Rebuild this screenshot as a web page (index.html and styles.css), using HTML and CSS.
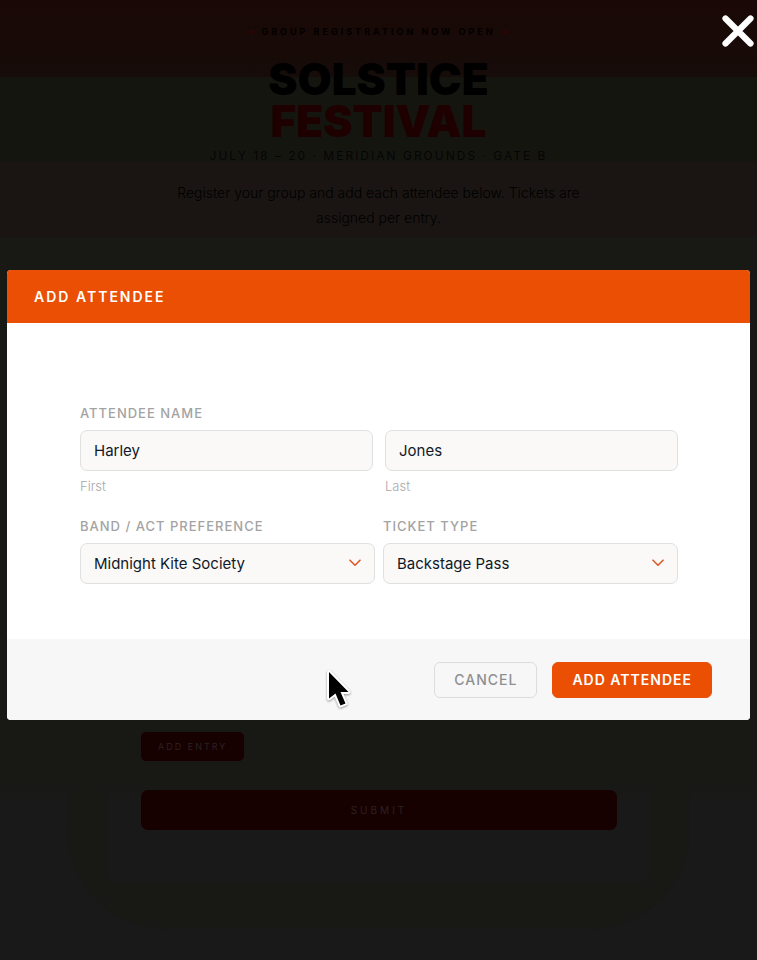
FILE: index.html
```html
<!DOCTYPE html>
<html lang="en">

<head>
    <meta charset="UTF-8">
    <meta name="viewport" content="width=device-width, initial-scale=1.0">
    <title>Solstice Festival</title>

    <link rel="stylesheet" href="styles.css">
</head>

<body>
    <div class="page">
        <header class="hero">
            <div class="eyebrow"><i class="dot"></i><span>GROUP REGISTRATION NOW OPEN</span><i class="dot"></i></div>
            <h1 class="title">SOLSTICE<br><span class="accent">FESTIVAL</span></h1>
            <div class="date">JULY 18 – 20 · MERIDIAN GROUNDS · GATE B</div>
            <p class="intro">Register your group and add each attendee below. Tickets are assigned per entry.</p>
        </header>

        <main class="halo">
            <div class="card">
                <div class="entries"></div>
                <button type="button" class="entry-button">ADD ENTRY</button>
                <button type="button" class="submit-button">SUBMIT</button>
            </div>
        </main>
    </div>

    <div class="overlay">
        <button type="button" class="close" aria-label="Close">
            <svg width="32" height="32" viewBox="0 0 32 32">
                <path d="M3.5 3.5L28.5 28.5M28.5 3.5L3.5 28.5" stroke="#fff" stroke-width="6.2" stroke-linecap="round" />
            </svg>
        </button>

        <form class="modal" role="dialog" aria-labelledby="modal-title">
            <h2 class="modal-header" id="modal-title">ADD ATTENDEE</h2>

            <div class="modal-body">
                <fieldset class="name">
                    <legend class="label">ATTENDEE NAME</legend>
                    <div class="name-row">
                        <div class="field">
                            <input class="control" id="first" type="text" value="Harley">
                            <label class="sublabel" for="first">First</label>
                        </div>
                        <div class="field">
                            <input class="control" id="last" type="text" value="Jones">
                            <label class="sublabel" for="last">Last</label>
                        </div>
                    </div>
                </fieldset>

                <div class="select-row">
                    <div class="field">
                        <label class="label" for="band">BAND / ACT PREFERENCE</label>
                        <div class="select">
                            <select class="control" id="band">
                                <option>Midnight Kite Society</option>
                            </select>
                            <svg class="chevron" width="12" height="8" viewBox="0 0 12 8">
                                <path d="M1 1.2L6 6.2L11 1.2" />
                            </svg>
                        </div>
                    </div>
                    <div class="field">
                        <label class="label" for="ticket">TICKET TYPE</label>
                        <div class="select">
                            <select class="control" id="ticket">
                                <option>Backstage Pass</option>
                            </select>
                            <svg class="chevron" width="12" height="8" viewBox="0 0 12 8">
                                <path d="M1 1.2L6 6.2L11 1.2" />
                            </svg>
                        </div>
                    </div>
                </div>
            </div>

            <div class="modal-footer">
                <button type="button" class="button cancel">CANCEL</button>
                <button type="button" class="button add">ADD ATTENDEE</button>
            </div>

            <svg class="cursor" width="32" height="44" viewBox="0 0 32 44">
                <path d="M5 4V30.5L11.5 25.5L16.5 37.5L21.5 35.5L16.5 24H24.5Z" fill="#000" stroke="#fff" stroke-width="4" stroke-linejoin="round" paint-order="stroke" />
            </svg>
        </form>
    </div>
</body>

</html>
```
FILE: styles.css
```css
* {
    box-sizing: border-box;
}

body {
    margin: 0;
    font-family: Inter, "Liberation Sans", sans-serif;
    background: #191919;
}

button,
input,
select {
    font-family: inherit;
}

.page {
    min-height: 100vh;
    padding: 24px 67px 32px;
    background: linear-gradient(#1a0806 0, #160c09 77px, #151510 77px, #151510 162px, #1a1512 162px, #1a1512 237px, #181815 237px, #181815 780px, #191919 800px);
}

/* hero */
.hero {
    text-align: center;
    color: #000;
}

.eyebrow {
    display: flex;
    align-items: center;
    justify-content: center;
    gap: 8px;
    font-size: 9px;
    line-height: 16px;
    font-weight: 700;
    letter-spacing: 3px;
}

.dot {
    width: 4px;
    height: 4px;
    border-radius: 50%;
    background: #300404;
}

.title {
    margin: 18px 0 6px;
    font-size: 44px;
    line-height: 42px;
    font-weight: 900;
}

.accent {
    color: #1e0000;
}

.date {
    font-size: 12px;
    line-height: 16px;
    letter-spacing: 2px;
    color: #050505;
}

.intro {
    max-width: 430px;
    margin: 16px auto 0;
    font-size: 14px;
    line-height: 25px;
    font-weight: 300;
}

/* group form */
.halo {
    margin-top: 42px;
    padding: 0 39px 46px 40px;
    border-radius: 0 0 100px 100px;
    background: #181815;
}

.card {
    padding: 34px 34px 53px;
    border-radius: 14px;
    background: linear-gradient(#181815 510px, #191919 530px);
}

.entries {
    min-height: 426px;
}

.entry-button,
.submit-button {
    display: block;
    border: none;
    background: #170000;
    color: #2b2222;
}

.entry-button {
    height: 29px;
    padding: 0 17px;
    border-radius: 5px;
    font-size: 9px;
    letter-spacing: 2px;
}

.submit-button {
    width: 100%;
    height: 40px;
    margin-top: 29px;
    border-radius: 7px;
    font-size: 10px;
    letter-spacing: 3px;
}

/* modal */
.overlay {
    position: fixed;
    top: 0;
    left: 0;
    width: 100%;
    height: 100%;
    padding: 30px 7px 0;
    display: flex;
    align-items: center;
}

.close {
    position: absolute;
    top: 15px;
    right: 3px;
    width: 32px;
    height: 32px;
    padding: 0;
    border: none;
    background: none;
    cursor: pointer;
}

.modal {
    position: relative;
    width: 100%;
    border-radius: 4px;
    background: #fff;
}

.modal-header {
    margin: 0;
    padding: 0 27px;
    border-radius: 4px 4px 0 0;
    background: #ea4f04;
    color: #fff;
    font-size: 14px;
    line-height: 53px;
    font-weight: 600;
    letter-spacing: 2px;
}

.modal-body {
    padding: 80px 72px 55px 73px;
}

.name {
    margin: 0;
    padding: 0;
    border: none;
}

.name-row,
.select-row {
    display: flex;
}

.name-row {
    gap: 12px;
}

.select-row {
    gap: 8px;
    margin-top: 20px;
}

.field {
    flex: 1;
    min-width: 0;
}

.label {
    display: block;
    padding: 0 0 7px;
    color: #a3a3a3;
    font-size: 13px;
    line-height: 20px;
    font-weight: 500;
    letter-spacing: 1px;
}

.control {
    display: block;
    width: 100%;
    height: 41px;
    padding: 0 13px;
    border: 1px solid #dfe0e0;
    border-radius: 7px;
    background: #faf9f8;
    color: #111827;
    font-size: 15px;
    appearance: none;
}

.sublabel {
    display: block;
    padding-top: 5px;
    color: #a8a8a8;
    font-size: 13px;
    line-height: 20px;
    font-weight: 300;
}

.select {
    position: relative;
}

.chevron {
    position: absolute;
    top: 16px;
    right: 14px;
    fill: none;
    stroke: #dc5a24;
    stroke-width: 1.6;
    stroke-linecap: round;
    stroke-linejoin: round;
    pointer-events: none;
}

.modal-footer {
    display: flex;
    align-items: center;
    justify-content: flex-end;
    gap: 15px;
    height: 81px;
    padding: 0 38px;
    border-radius: 0 0 4px 4px;
    background: #f7f7f7;
}

.button {
    height: 36px;
    padding: 0 19px;
    border: 1px solid #ea4f04;
    border-radius: 6px;
    font-size: 14px;
    font-weight: 600;
    letter-spacing: 1px;
    cursor: pointer;
}

.cancel {
    border-color: #dcdddd;
    background: #f7f7f7;
    color: #8d9093;
    font-weight: 500;
}

.add {
    background: #ea4f04;
    color: #fff;
}

.cursor {
    position: absolute;
    left: 317px;
    bottom: 8px;
    filter: drop-shadow(0 1px 1px rgba(0, 0, 0, 0.4));
    pointer-events: none;
}
```
